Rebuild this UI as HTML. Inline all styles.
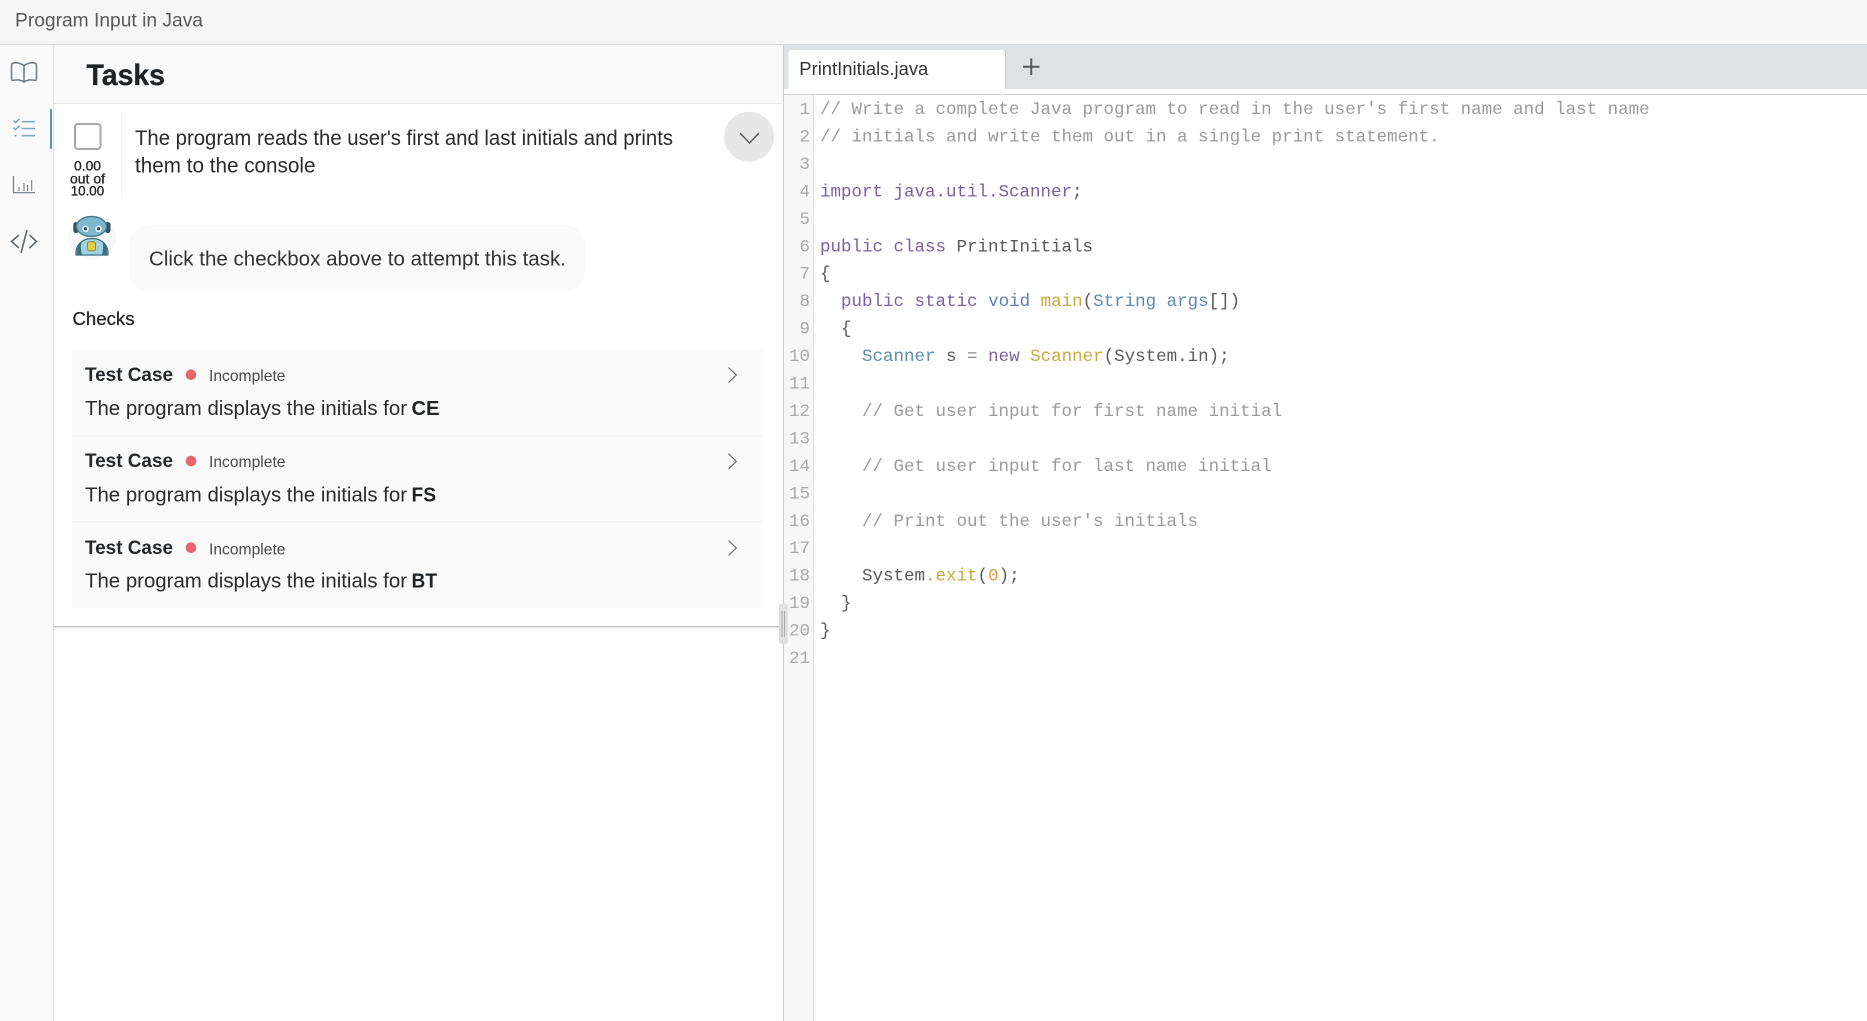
<!DOCTYPE html>
<html lang="en">
<head>
<meta charset="utf-8">
<title>Program Input in Java</title>
<style>
html,body{margin:0;padding:0;width:1867px;height:1021px;overflow:hidden;background:#fff}
svg{display:block;position:absolute;left:0;top:0}
text{font-family:"Liberation Sans",sans-serif;white-space:pre}
.c text,.c{font-family:"Liberation Mono",monospace;font-size:17.5px;fill:#5a5a5a}
.n{font-family:"Liberation Mono",monospace;font-size:17.5px;fill:#aaa;text-anchor:end}
</style>
</head>
<body>
<svg width="1867" height="1021" viewBox="0 0 1867 1021" xmlns="http://www.w3.org/2000/svg">
<!-- header -->
<rect x="0" y="0" width="1867" height="44" fill="#f6f6f6"/>
<rect x="0" y="44" width="1867" height="1" fill="#d9d9d9"/>
<text x="15" y="26.5" font-size="19.5" fill="#595959" textLength="188" lengthAdjust="spacingAndGlyphs">Program Input in Java</text>

<!-- rail -->
<rect x="0" y="45" width="53" height="976" fill="#fafafa"/>
<rect x="53" y="45" width="1" height="976" fill="#e4e4e4"/>
<rect x="50" y="109" width="2" height="40" fill="#5b95b8"/>
<g fill="none" stroke="#6d7780" stroke-width="1.5">
<path d="M24 65.500C20 63 16 62.500 13.500 63Q11.500 63.300 11.500 65.500V78.500Q11.500 80.700 13.500 80.300C17 79.500 21 79.800 24 82C27 79.800 31 79.500 34.500 80.300Q36.500 80.700 36.500 78.500V65.500Q36.500 63.300 34.500 63C32 62.500 28 63 24 65.500ZM24 65.500V82"/>
<path d="M13.500 176V192.700H35" stroke-width="1.200"/>
<path d="M19 187V191M24 183V191M27.500 185V191M31.700 180V191" stroke-width="1"/>
<path d="M19 235L11.500 241.500L19 248M27 230L21 253M29.500 235L36.500 241.500L29.500 248" stroke-width="1.600" stroke="#5f6870"/>
</g>
<g fill="none" stroke="#7fabc0" stroke-width="1.600">
<path d="M21.700 121.700H35M21.700 128.500H35M21.700 135.700H35"/>
<path d="M13.500 120.700L15.500 122.500L19.500 118.800M13.500 127.700L15.500 129.500L19.500 125.800M14.500 135.700H16.500" stroke-width="1.400" stroke="#6fa5c0"/>
</g>

<!-- tasks heading -->
<rect x="54" y="45" width="729" height="58" fill="#fafafa"/>
<rect x="54" y="103" width="729" height="1" fill="#e6e6e6"/>
<text x="86.500" y="85" font-size="30" font-weight="700" fill="#1f2326" stroke="#1f2326" stroke-width=".3" textLength="78.500" lengthAdjust="spacingAndGlyphs">Tasks</text>

<!-- task row -->
<rect x="75" y="124" width="25.500" height="25" rx="3" fill="#fff" stroke="#a8a8a8" stroke-width="2"/>
<rect x="121" y="112" width="1" height="85" fill="#efefef"/>
<g font-size="13.500" fill="#222" stroke="#222" stroke-width=".3">
<text x="74" y="170.700" textLength="27" lengthAdjust="spacingAndGlyphs">0.00</text>
<text x="70" y="183.300" textLength="35" lengthAdjust="spacingAndGlyphs">out of</text>
<text x="70.700" y="195.700" textLength="33.500" lengthAdjust="spacingAndGlyphs">10.00</text>
</g>
<g font-size="21" fill="#2b2b2b">
<text x="135" y="145" textLength="538" lengthAdjust="spacingAndGlyphs">The program reads the user's first and last initials and prints</text>
<text x="135" y="172.700" textLength="180.500" lengthAdjust="spacingAndGlyphs">them to the console</text>
</g>
<circle cx="749" cy="136.700" r="25" fill="#e7e7e7"/>
<path d="M740 133L749.500 143L759 133" fill="none" stroke="#555" stroke-width="1.400"/>

<!-- robot -->
<ellipse cx="92" cy="238" rx="24" ry="22" fill="#eef2f3" opacity=".5"/>
<path d="M76 255C75.500 245 82 238.500 92 238.500C102 238.500 108.500 245 108 255Z" fill="#9fd2e2" stroke="#3e6f80" stroke-width="1.300"/>
<path d="M77 254.500C76.800 248 78.500 244 81.500 241.500C80.500 246 81 251 82 254.500ZM107 254.500C107.200 248 105.500 244 102.500 241.500C103.500 246 103 251 102 254.500Z" fill="#3e6f80"/>
<rect x="73.300" y="222" width="5.500" height="11" rx="2.700" fill="#33525f"/>
<rect x="105" y="222" width="5.500" height="11" rx="2.700" fill="#33525f"/>
<ellipse cx="91.500" cy="226.500" rx="15" ry="10" fill="#80b7cb" stroke="#4a7c90" stroke-width="1.400"/>
<circle cx="85.500" cy="228.800" r="3.300" fill="#eaf6fa"/><circle cx="85.500" cy="228.800" r="1.600" fill="#1f4452"/>
<circle cx="98.500" cy="228.800" r="3.300" fill="#eaf6fa"/><circle cx="98.500" cy="228.800" r="1.600" fill="#1f4452"/>
<rect x="87.500" y="241.800" width="8" height="9" rx="2" fill="#e6cf3e" stroke="#8b8a4c" stroke-width="1"/>

<!-- bubble -->
<rect x="129" y="225" width="456" height="67" rx="20" fill="#fafafa"/>
<text x="149" y="265.700" font-size="20.500" fill="#333" textLength="417" lengthAdjust="spacingAndGlyphs">Click the checkbox above to attempt this task.</text>

<!-- checks -->
<text x="72.500" y="325" font-size="18" fill="#222" stroke="#222" stroke-width=".25" textLength="62" lengthAdjust="spacingAndGlyphs">Checks</text>
<rect x="72" y="349" width="691" height="258.500" fill="#fafafa"/>
<rect x="72" y="435" width="691" height="1.500" fill="#f3f3f3"/>
<rect x="72" y="521" width="691" height="1.500" fill="#f3f3f3"/>

<g font-size="19.500" font-weight="700" fill="#26292c">
<text x="85" y="381" textLength="88" lengthAdjust="spacingAndGlyphs">Test Case</text>
<text x="85" y="467" textLength="88" lengthAdjust="spacingAndGlyphs">Test Case</text>
<text x="85" y="554" textLength="88" lengthAdjust="spacingAndGlyphs">Test Case</text>
</g>
<g fill="#e9656d">
<circle cx="191" cy="374.700" r="5.300"/><circle cx="191" cy="461" r="5.300"/><circle cx="191" cy="547.700" r="5.300"/>
</g>
<g font-size="16" fill="#4a4a4a">
<text x="209" y="381.200" textLength="76.500" lengthAdjust="spacingAndGlyphs">Incomplete</text>
<text x="209" y="467.200" textLength="76.500" lengthAdjust="spacingAndGlyphs">Incomplete</text>
<text x="209" y="554.500" textLength="76.500" lengthAdjust="spacingAndGlyphs">Incomplete</text>
</g>
<g font-size="20.500" fill="#2b2b2b">
<text x="85" y="415" textLength="322" lengthAdjust="spacingAndGlyphs">The program displays the initials for</text>
<text x="85" y="501.700" textLength="322" lengthAdjust="spacingAndGlyphs">The program displays the initials for</text>
<text x="85" y="587.700" textLength="322" lengthAdjust="spacingAndGlyphs">The program displays the initials for</text>
</g>
<g font-size="20.500" font-weight="700" fill="#1f2326">
<text x="411.500" y="415" textLength="28" lengthAdjust="spacingAndGlyphs">CE</text>
<text x="411.500" y="501.700" textLength="24.500" lengthAdjust="spacingAndGlyphs">FS</text>
<text x="411.500" y="587.700" textLength="25.500" lengthAdjust="spacingAndGlyphs">BT</text>
</g>
<g fill="none" stroke="#666" stroke-width="1.200">
<path d="M728.500 367.500L736.300 375L728.500 382.500"/>
<path d="M728.500 453.500L736.300 461.500L728.500 469"/>
<path d="M728.500 540.500L736.300 548L728.500 555.500"/>
</g>
<rect x="54" y="626" width="729" height="1.500" fill="#c9c9c9"/>

<!-- editor -->
<rect x="784" y="45" width="1083" height="44" fill="#dfe2e5"/>
<rect x="784" y="89" width="1083" height="5" fill="#fff"/>
<rect x="784" y="94" width="1083" height="1" fill="#cfcfcf"/>
<path d="M788.500 89V53a3 3 0 0 1 3-3H1002a3 3 0 0 1 3 3V89Z" fill="#fff"/>
<rect x="1005" y="50" width="1" height="39" fill="#c9ccd0"/>
<text x="799.300" y="75" font-size="18" fill="#333" textLength="129" lengthAdjust="spacingAndGlyphs">PrintInitials.java</text>
<path d="M1023 66.700H1039.500M1031.300 58.500V75" fill="none" stroke="#555" stroke-width="2"/>
<rect x="784" y="95" width="29" height="926" fill="#f7f7f7"/>
<rect x="813" y="95" width="1" height="926" fill="#e3e3e3"/>
<rect x="783" y="45" width="1" height="976" fill="#cdcdcd"/>
<rect x="779.300" y="604" width="8" height="39.500" rx="2" fill="#dfe1e5" stroke="#d2d4d8" stroke-width=".6"/>
<path d="M782 611V637M784.500 611V637" stroke="#a8a8a8" stroke-width="1" fill="none"/>

<!-- line numbers -->
<g>
<text class="n" x="810" y="114">1</text>
<text class="n" x="810" y="141.500">2</text>
<text class="n" x="810" y="168.900">3</text>
<text class="n" x="810" y="196.400">4</text>
<text class="n" x="810" y="223.800">5</text>
<text class="n" x="810" y="251.300">6</text>
<text class="n" x="810" y="278.700">7</text>
<text class="n" x="810" y="306.200">8</text>
<text class="n" x="810" y="333.600">9</text>
<text class="n" x="810" y="361.100">10</text>
<text class="n" x="810" y="388.500">11</text>
<text class="n" x="810" y="416">12</text>
<text class="n" x="810" y="443.400">13</text>
<text class="n" x="810" y="470.900">14</text>
<text class="n" x="810" y="498.300">15</text>
<text class="n" x="810" y="525.800">16</text>
<text class="n" x="810" y="553.200">17</text>
<text class="n" x="810" y="580.700">18</text>
<text class="n" x="810" y="608.100">19</text>
<text class="n" x="810" y="635.600">20</text>
<text class="n" x="810" y="663">21</text>
</g>

<!-- code -->
<g class="c">
<text x="820" y="114" style="fill:#9b9b9b">// Write a complete Java program to read in the user's first name and last name</text>
<text x="820" y="141.500" style="fill:#9b9b9b">// initials and write them out in a single print statement.</text>
<text x="820" y="196.400"><tspan style="fill:#7a63a0">import java.util.Scanner</tspan>;</text>
<text x="820" y="251.300"><tspan style="fill:#7a63a0">public class</tspan> PrintInitials</text>
<text x="820" y="278.700">{</text>
<text x="820" y="306.200">  <tspan style="fill:#7a63a0">public static</tspan> <tspan style="fill:#5f7fae">void</tspan> <tspan style="fill:#c9a83c">main</tspan>(<tspan style="fill:#5a8cb0">String args</tspan>[])</text>
<text x="820" y="333.600">  {</text>
<text x="820" y="361.100">    <tspan style="fill:#5a8cb0">Scanner</tspan> s <tspan style="fill:#8a8a8a">=</tspan> <tspan style="fill:#7a63a0">new</tspan> <tspan style="fill:#c9a83c">Scanner</tspan>(System.in);</text>
<text x="820" y="416" style="fill:#9b9b9b">    // Get user input for first name initial</text>
<text x="820" y="470.900" style="fill:#9b9b9b">    // Get user input for last name initial</text>
<text x="820" y="525.800" style="fill:#9b9b9b">    // Print out the user's initials</text>
<text x="820" y="580.700">    System<tspan style="fill:#c9a83c">.exit</tspan>(<tspan style="fill:#dc9d4a">0</tspan>);</text>
<text x="820" y="608.100">  }</text>
<text x="820" y="635.600">}</text>
</g>
</svg>
</body>
</html>
